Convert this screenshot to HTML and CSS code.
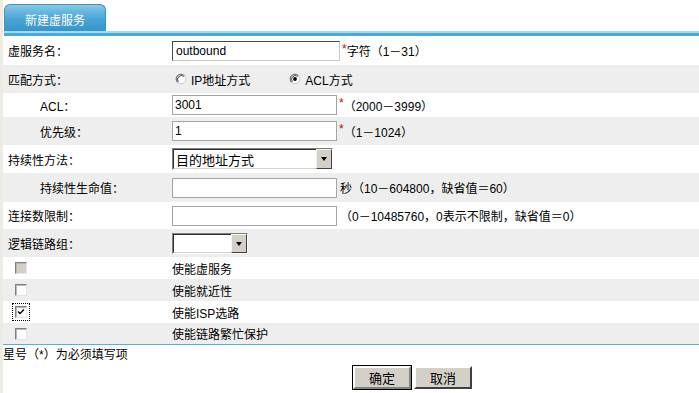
FILE: index.html
```html
<!DOCTYPE html>
<html lang="zh-CN">
<head>
<meta charset="utf-8">
<title>新建虚服务</title>
<link rel="stylesheet" href="styles.css">
</head>
<body>
<div class="page">
  <div class="tabs"><div class="tab">新建虚服务</div></div>
  <div class="bar"></div>
  <div class="form">
    <div class="row h29">
      <div class="label">虚服务名：</div>
      <div class="value"><span class="txt focus w168">outbound</span><span class="req">*</span>字符（1－31）</div>
    </div>
    <div class="row alt h28">
      <div class="label">匹配方式：</div>
      <div class="value">
        <span class="radio-item"><svg class="radio" width="12" height="12" viewBox="0 0 12 12"><circle cx="6" cy="6" r="4.8" fill="#fff" stroke="#c8c8c8" stroke-width="1"/><path d="M2.6 9.4 A4.8 4.8 0 0 1 9.4 2.6" fill="none" stroke="#707070" stroke-width="1.1"/><path d="M3.4 8.6 A3.7 3.7 0 0 1 8.6 3.4" fill="none" stroke="#303030" stroke-width="0.9"/></svg>IP地址方式</span>
        <span class="radio-item second"><svg class="radio" width="12" height="12" viewBox="0 0 12 12"><circle cx="6" cy="6" r="4.8" fill="#fff" stroke="#c8c8c8" stroke-width="1"/><path d="M2.6 9.4 A4.8 4.8 0 0 1 9.4 2.6" fill="none" stroke="#707070" stroke-width="1.1"/><path d="M3.4 8.6 A3.7 3.7 0 0 1 8.6 3.4" fill="none" stroke="#303030" stroke-width="0.9"/><circle cx="6" cy="6" r="1.9" fill="#000"/></svg>ACL方式</span>
      </div>
    </div>
    <div class="row h24">
      <div class="label ind">ACL：</div>
      <div class="value"><span class="txt w165">3001</span><span class="req">*</span>（2000－3999）</div>
    </div>
    <div class="row alt h28">
      <div class="label ind">优先级：</div>
      <div class="value"><span class="txt w165">1</span><span class="req">*</span>（1－1024）</div>
    </div>
    <div class="row h28">
      <div class="label">持续性方法：</div>
      <div class="value"><span class="sel w161"><span class="sel-text">目的地址方式</span><span class="arrow"></span></span></div>
    </div>
    <div class="row alt h29">
      <div class="label ind">持续性生命值：</div>
      <div class="value"><span class="txt w165"></span><span class="after">秒（10－604800，缺省值＝60）</span></div>
    </div>
    <div class="row h27">
      <div class="label">连接数限制：</div>
      <div class="value"><span class="txt w165"></span><span class="after">（0－10485760，0表示不限制，缺省值＝0）</span></div>
    </div>
    <div class="row alt h28">
      <div class="label">逻辑链路组：</div>
      <div class="value"><span class="sel w76 short"><span class="sel-text"></span><span class="arrow"></span></span></div>
    </div>
    <div class="row h22">
      <div class="label cbcell"><span class="cb disabled"></span></div>
      <div class="value">使能虚服务</div>
    </div>
    <div class="row alt h22">
      <div class="label cbcell"><span class="cb"></span></div>
      <div class="value">使能就近性</div>
    </div>
    <div class="row h22">
      <div class="label cbcell"><span class="focusring"><span class="cb"><svg width="8" height="8" viewBox="0 0 8 8"><path d="M1 3.5 L3 5.5 L7 1.5" fill="none" stroke="#000" stroke-width="1.4"/></svg></span></span></div>
      <div class="value">使能ISP选路</div>
    </div>
    <div class="row alt h21">
      <div class="label cbcell"><span class="cb"></span></div>
      <div class="value">使能链路繁忙保护</div>
    </div>
  </div>
  <div class="note">星号（*）为必须填写项</div>
  <div class="buttons">
    <span class="btn default">确定</span>
    <span class="btn">取消</span>
  </div>
</div>
</body>
</html>
```

FILE: styles.css
```css
html, body {
  margin: 0;
  padding: 0;
  background: #ffffff;
}
body {
  font-family: "Liberation Sans", "Noto Sans CJK SC", sans-serif;
  font-size: 12px;
  color: #000;
}
.page {
  border-left: 3px solid #ecebe4;
  min-height: 393px;
  box-sizing: border-box;
  padding-top: 4px;
}
.tabs {
  display: flex;
  padding-left: 1px;
  height: 27px;
}
.tab {
  width: 102px;
  box-sizing: border-box;
  border: 1px solid #3f93c3;
  border-bottom: none;
  border-radius: 6px 6px 0 0;
  background: linear-gradient(#86c8ea, #4aa3d4 55%, #3596cc);
  color: #fff;
  display: flex;
  align-items: center;
  justify-content: center;
  padding-top: 2px;
}
.bar {
  height: 2px;
  background: #a6d9ee;
  border-bottom: 3px solid #4ea8d4;
  margin-left: 1px;
}
.form {
  border-bottom: 1px solid #58b0da;
}
.row {
  display: flex;
  align-items: center;
}
.row.alt { background: #eeeeee; }
.h21 { height: 21px; }
.h22 { height: 22px; }
.h24 { height: 24px; }
.h27 { height: 27px; }
.h28 { height: 28px; }
.h29 { height: 29px; }
.label {
  width: 169px;
  box-sizing: border-box;
  padding-left: 5px;
  flex: none;
}
.label.ind { padding-left: 37px; }
.label.cbcell {
  padding-left: 12px;
  display: flex;
  align-items: center;
}
.value {
  display: flex;
  align-items: center;
  white-space: nowrap;
}
.after { margin-left: 3px; }
.txt {
  display: inline-flex;
  align-items: center;
  height: 20px;
  box-sizing: border-box;
  border: 1px solid #a5a5a5;
  background: #fff;
  padding: 0 2px;
}
.txt.focus {
  border-color: #4a4a4a #c8c8c8 #c8c8c8 #4a4a4a;
  padding-left: 3px;
}
.w168 { width: 168px; }
.w165 { width: 165px; }
.w161 { width: 161px; }
.w76 { width: 76px; }
.req {
  color: #d00000;
  margin-left: 2px;
  align-self: flex-start;
  margin-top: 1px;
}
.radio-item {
  display: inline-flex;
  align-items: center;
  padding-left: 3px;
}
.radio { margin-right: 4px; }
.radio-item.second { margin-left: 36px; }
.sel {
  display: inline-flex;
  align-items: stretch;
  height: 22px;
  box-sizing: border-box;
  border: 1px solid;
  border-color: #808080 #ffffff #ffffff #808080;
  background: #fff;
}
.sel.short { height: 21px; }
.sel-text {
  flex: 1;
  border: 1px solid;
  border-color: #303030 #d4d0c8 #d4d0c8 #303030;
  border-right: none;
  padding-left: 2px;
  display: flex;
  align-items: center;
  font-size: 13px;
}
.arrow {
  width: 16px;
  box-sizing: border-box;
  background: #d4d0c8;
  border: 1px solid;
  border-color: #f4f4f4 #404040 #404040 #f4f4f4;
  position: relative;
}
.arrow::after {
  content: "";
  position: absolute;
  left: 4px;
  top: 7px;
  border-left: 3px solid transparent;
  border-right: 3px solid transparent;
  border-top: 4px solid #000;
}
.cb {
  width: 12px;
  height: 12px;
  box-sizing: border-box;
  border: 1px solid;
  border-color: #808080 #e4e4e4 #e4e4e4 #808080;
  box-shadow: inset 1px 1px 0 #b8b8b8;
  background: #fff;
  display: inline-flex;
  align-items: center;
  justify-content: center;
}
.cb.disabled { background: #d4d0c8; }
.focusring {
  display: inline-flex;
  padding: 2px;
  margin: -3px;
  border: 1px dotted #000;
}
.note {
  padding: 3px 0 0 0;
  line-height: 14px;
}
.buttons {
  display: flex;
  gap: 3px;
  padding-left: 350px;
  margin-top: 4px;
}
.btn {
  width: 58px;
  height: 23px;
  box-sizing: border-box;
  background: #d4d0c8;
  border: 2px solid;
  border-color: #ffffff #404040 #404040 #ffffff;
  display: flex;
  align-items: center;
  justify-content: center;
  font-size: 13px;
}
.btn.default {
  outline: 1px solid #000;
  outline-offset: 0;
  border-color: #ffffff #808080 #808080 #ffffff;
}
```
